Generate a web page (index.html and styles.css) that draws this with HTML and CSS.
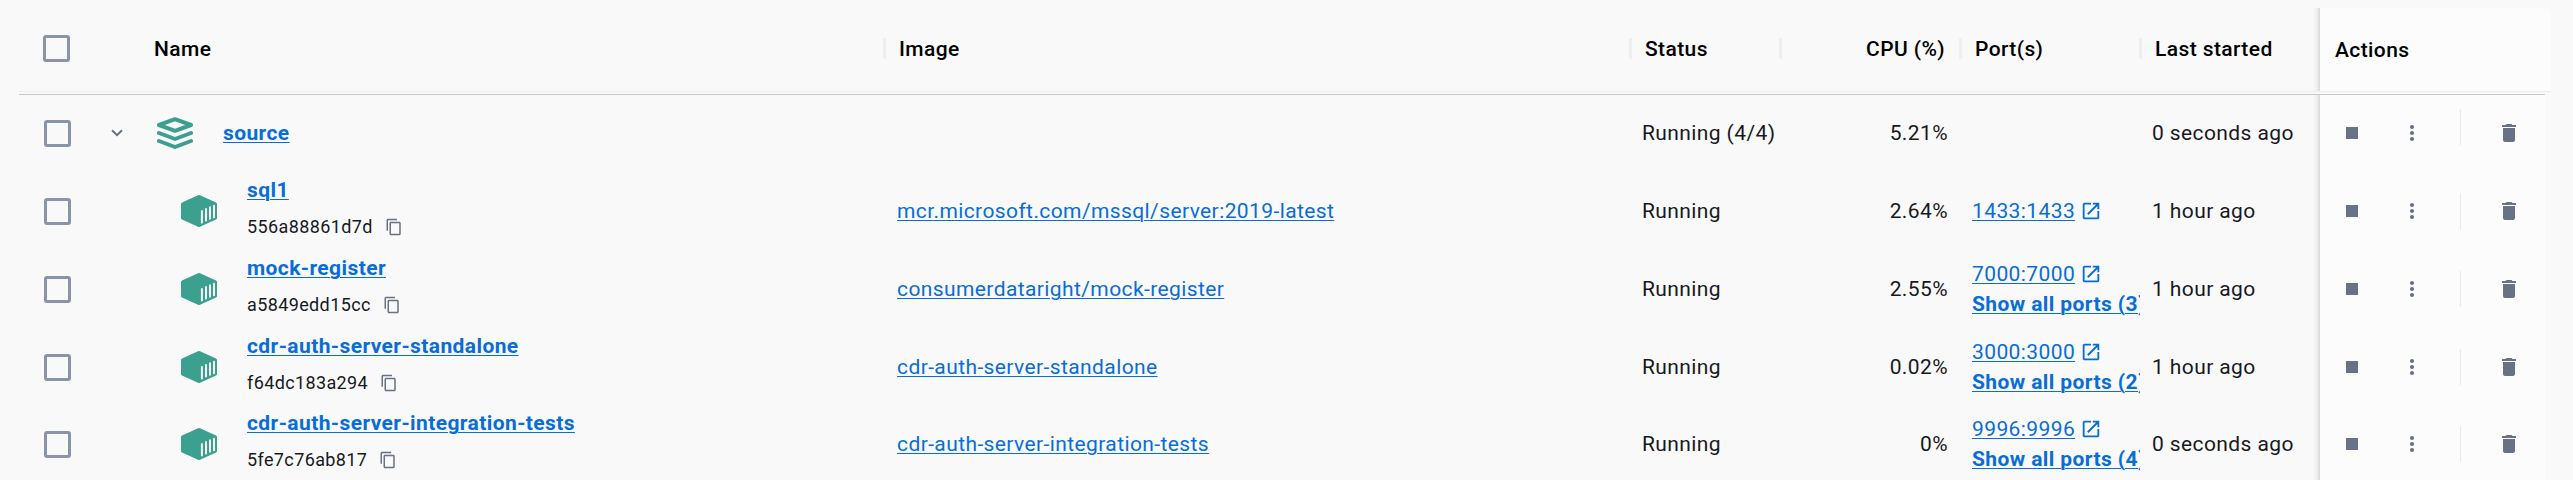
FILE: index.html
```
<!DOCTYPE html>
<html lang="en">
<head>
<meta charset="utf-8">
<title>Containers</title>
<link rel="stylesheet" href="styles.css">
</head>
<body>
<svg class="defs" aria-hidden="true">
  <symbol id="stack" viewBox="0 0 36 32"><g fill="none" stroke="currentColor" stroke-width="4" stroke-linejoin="round" stroke-linecap="round"><path d="M18 2.200 34 8 18 13.800 2 8z"/><path d="M2 16l16 6 16-6M2 24l16 6 16-6"/></g></symbol>
  <symbol id="box" viewBox="0 0 36 32"><path fill="currentColor" d="M17 .3q1-.5 2 0L35 7.400q1 .5 1 1.500v14.200q0 1-1 1.500L19 31.700q-1 .5-2 0L1 24.600q-1-.5-1-1.500V8.900q0-1 1-1.500z"/><path stroke="#f9f9fa" stroke-width="2" stroke-linecap="round" d="M20.900 16v11.500M25 14v11.500M29 12.200v11.500M33 10.700v11.500"/></symbol>
  <symbol id="copy" viewBox="0 0 24 24"><path fill="currentColor" d="M16 1H4c-1.100 0-2 .9-2 2v14h2V3h12V1zm3 4H8c-1.100 0-2 .9-2 2v14c0 1.100.9 2 2 2h11c1.100 0 2-.9 2-2V7c0-1.100-.9-2-2-2zm0 16H8V7h11v14z"/></symbol>
  <symbol id="open" viewBox="0 0 24 24"><path fill="currentColor" d="M19 19H5V5h7V3H5c-1.110 0-2 .9-2 2v14c0 1.100.89 2 2 2h14c1.100 0 2-.9 2-2v-7h-2v7zM14 3v2h3.590l-9.830 9.830 1.410 1.410L19 6.410V10h2V3h-7z"/></symbol>
  <symbol id="chev" viewBox="0 0 12 8"><path fill="none" stroke="currentColor" stroke-width="2" d="M1 1.200l5 5 5-5"/></symbol>
  <symbol id="stop" viewBox="0 0 24 24"><path fill="currentColor" d="M6 6h12v12H6z"/></symbol>
  <symbol id="more" viewBox="0 0 24 24"><g fill="currentColor"><circle cx="12" cy="6" r="2.100"/><circle cx="12" cy="12" r="2.100"/><circle cx="12" cy="18" r="2.100"/></g></symbol>
  <symbol id="trash" viewBox="0 0 24 24"><path fill="currentColor" d="M6 19c0 1.100.9 2 2 2h8c1.100 0 2-.9 2-2V7H6v12zM19 4h-3.500l-1-1h-5l-1 1H5v2h14V4z"/></symbol>
</svg>
<main class="table">
  <div class="head row">
    <span class="check"></span>
    <span class="h-name">Name</span>
    <span class="h-cell">Image</span>
    <span class="h-cell">Status</span>
    <span class="h-cell h-cpu">CPU (%)</span>
    <span class="h-cell">Port(s)</span>
    <span class="h-cell">Last started</span>
    <div class="h-actions">Actions</div>
  </div>
  <div class="row group">
    <span class="check"></span>
    <div class="name"><svg class="chev"><use href="#chev"/></svg><svg class="kind"><use href="#stack"/></svg><a class="title">source</a></div>
    <div class="image"></div>
    <div class="status">Running (4/4)</div>
    <div class="cpu">5.21%</div>
    <div class="ports"></div>
    <div class="started">0 seconds ago</div>
    <div class="actions"><svg><use href="#stop"/></svg><svg class="menu"><use href="#more"/></svg><i></i><svg><use href="#trash"/></svg></div>
  </div>
  <div class="row">
    <span class="check"></span>
    <div class="name child"><svg class="kind"><use href="#box"/></svg><div class="label"><a class="title">sql1</a><div class="hash">556a88861d7d<svg><use href="#copy"/></svg></div></div></div>
    <div class="image"><a>mcr.microsoft.com/mssql/server:2019-latest</a></div>
    <div class="status">Running</div>
    <div class="cpu">2.64%</div>
    <div class="ports"><div class="port"><a>1433:1433</a><svg><use href="#open"/></svg></div></div>
    <div class="started">1 hour ago</div>
    <div class="actions"><svg><use href="#stop"/></svg><svg class="menu"><use href="#more"/></svg><i></i><svg><use href="#trash"/></svg></div>
  </div>
  <div class="row">
    <span class="check"></span>
    <div class="name child"><svg class="kind"><use href="#box"/></svg><div class="label"><a class="title">mock-register</a><div class="hash">a5849edd15cc<svg><use href="#copy"/></svg></div></div></div>
    <div class="image"><a>consumerdataright/mock-register</a></div>
    <div class="status">Running</div>
    <div class="cpu">2.55%</div>
    <div class="ports"><div class="port"><a>7000:7000</a><svg><use href="#open"/></svg></div><a class="all">Show all ports (3)</a></div>
    <div class="started">1 hour ago</div>
    <div class="actions"><svg><use href="#stop"/></svg><svg class="menu"><use href="#more"/></svg><i></i><svg><use href="#trash"/></svg></div>
  </div>
  <div class="row">
    <span class="check"></span>
    <div class="name child"><svg class="kind"><use href="#box"/></svg><div class="label"><a class="title">cdr-auth-server-standalone</a><div class="hash">f64dc183a294<svg><use href="#copy"/></svg></div></div></div>
    <div class="image"><a>cdr-auth-server-standalone</a></div>
    <div class="status">Running</div>
    <div class="cpu">0.02%</div>
    <div class="ports"><div class="port"><a>3000:3000</a><svg><use href="#open"/></svg></div><a class="all">Show all ports (2)</a></div>
    <div class="started">1 hour ago</div>
    <div class="actions"><svg><use href="#stop"/></svg><svg class="menu"><use href="#more"/></svg><i></i><svg><use href="#trash"/></svg></div>
  </div>
  <div class="row last">
    <span class="check"></span>
    <div class="name child"><svg class="kind"><use href="#box"/></svg><div class="label"><a class="title">cdr-auth-server-integration-tests</a><div class="hash">5fe7c76ab817<svg><use href="#copy"/></svg></div></div></div>
    <div class="image"><a>cdr-auth-server-integration-tests</a></div>
    <div class="status">Running</div>
    <div class="cpu">0%</div>
    <div class="ports"><div class="port"><a>9996:9996</a><svg><use href="#open"/></svg></div><a class="all">Show all ports (4)</a></div>
    <div class="started">0 seconds ago</div>
    <div class="actions"><svg><use href="#stop"/></svg><svg class="menu"><use href="#more"/></svg><i></i><svg><use href="#trash"/></svg></div>
  </div>
</main>
</body>
</html>
```
FILE: styles.css
```
* { box-sizing: border-box; }
html, body { margin: 0; height: 480px; overflow: hidden; background: #f9f9fa; }
body { font: 400 21px/30px Roboto, sans-serif; letter-spacing: 0.4px; color: #17191e; }
svg { display: block; flex: none; }
.defs { position: absolute; width: 0; height: 0; }
a { color: #086dd7; text-decoration: underline; text-underline-offset: 2px; text-decoration-thickness: 1px; }
.table { margin: 8px 22px 0 19px; }
.row {
  display: grid;
  grid-template-columns: 94px 770px 746px 150px 180px 180px 181px 231px;
  height: 78px;
  align-items: center;
  white-space: nowrap;
}
.check { width: 27px; height: 27px; margin-left: 24.500px; border: 3px solid #8993a9; border-radius: 3px; }

.head { height: 84px; border-bottom: 1px solid #ececee; font-weight: 500; color: #000; }
.head .check { margin: -2px 0 0 24px; }
.h-name { padding-left: 41px; margin-top: -2px; }
.h-cell { display: flex; align-items: center; margin-top: -2px; }
.h-cell::before { content: ""; width: 3px; height: 21px; margin-right: 13px; background: #eeeff2; }
.h-cpu { justify-content: space-between; padding-right: 14px; }
.h-actions { position: relative; height: 83px; padding: 27px 15px; background: #fcfcfd; border-top-right-radius: 6px; }

/* edge shadow of the pinned column */
.h-actions::before, .actions::before {
  content: "";
  position: absolute;
  top: 0;
  bottom: 0;
  left: -7px;
  width: 7px;
  background: linear-gradient(to left, rgba(0, 0, 0, .13), rgba(0, 0, 0, .04) 45%, transparent);
}

.group { margin-top: 2px; padding-bottom: 1px; border-top: 1px solid #c4c8d1; width: 2526px; }
.last { height: 76px; }
.name { display: flex; align-items: center; }
.chev { width: 12px; height: 8px; margin-left: -2px; color: #677285; }
.kind { width: 36px; height: 32px; color: #3ba08d; }
.name > .chev + .kind { margin-left: 34px; }
.group .title { margin-left: 30px; }
.child { padding-left: 68px; }
.label { margin-left: 30px; padding-bottom: 5px; }
.title { font-weight: 700; letter-spacing: .4px; }
.label .title { display: block; line-height: 30px; margin-bottom: 7px; }
.hash { display: flex; align-items: center; gap: 12px; font-size: 18px; line-height: 30px; letter-spacing: .38px; }
.hash svg { width: 18px; height: 18px; color: #677285; }
.image { padding-left: 14px; }
.status { padding-left: 13px; }
.cpu { text-align: right; padding-right: 11px; }
.ports { padding-left: 13px; margin-right: -1px; overflow: hidden; }
.port { display: flex; align-items: center; gap: 5px; }
.port svg { width: 22px; height: 22px; color: #086dd7; }
.all { display: block; font-weight: 700; letter-spacing: .4px; }
.started { padding-left: 13px; }
.actions { position: relative; display: flex; align-items: center; align-self: stretch; width: 225px; padding-left: 20px; background: #fcfcfd; color: #677285; }
.group .actions { margin-bottom: -1px; padding-bottom: 1px; }
.actions svg { width: 24px; height: 24px; }
.actions .menu { margin-left: 36px; }
.actions i { width: 1px; height: 36px; margin: 0 36px; background: #e9eaee; }
.group .actions i { transform: translateY(-6px); }
```
